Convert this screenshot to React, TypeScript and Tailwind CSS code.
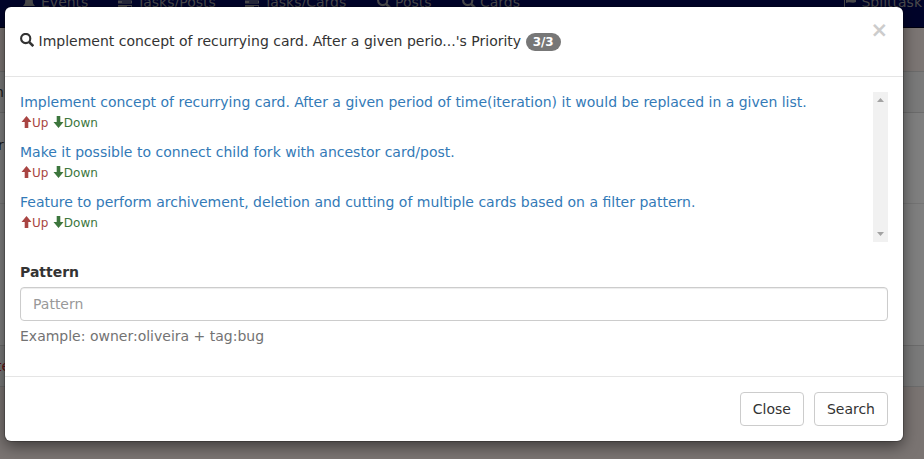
import React from "react";

const SearchIcon = ({ className = "" }: { className?: string }) => (
  <svg viewBox="0 0 14 14" className={`h-[14px] w-[14px] shrink-0 ${className}`} fill="none" stroke="currentColor">
    <circle cx="5.7" cy="5.5" r="4.6" strokeWidth="2.1" />
    <path d="M9 8.900l4.300 4.200" strokeWidth="2.700" />
  </svg>
);

const BellIcon = () => (
  <svg viewBox="0 0 14 14" className="h-[14px] w-[14px] shrink-0" fill="currentColor">
    <path d="M6 1h2v1c2 .5 2.8 2 2.8 4 0 2 .6 3.500 2.200 5H1c1.600-1.500 2.200-3 2.200-5C3.200 4 4 2.500 6 2zM5.500 12h3v1h-3z" />
  </svg>
);

const TasksIcon = () => (
  <svg viewBox="0 0 14 14" className="h-[14px] w-[14px] shrink-0" fill="currentColor">
    <path fillRule="evenodd" d="M0 1h14v3H0zM8 2h5v1H8zM0 5.500h14v3H0zM4 6.500h9v1H4zM0 10h14v3H0zM9 11h4v1H9z" />
  </svg>
);

const FlagIcon = () => (
  <svg viewBox="0 0 14 14" className="h-[14px] w-[14px] shrink-0" fill="currentColor">
    <path d="M1 0h1v14H1zM3 1c3-1 5 2 10 0v6c-4 2-6-1-10 1z" />
  </svg>
);

const Arrow = ({ down = false }: { down?: boolean }) => (
  <svg viewBox="0 0 12 12" className={`-mt-[2px] h-3 w-3 shrink-0 ${down ? "-scale-y-100" : ""}`} fill="currentColor">
    <path d="M6.500 0L11.500 6H8.300V12H4.700V6H1.500z" />
  </svg>
);

const cards = [
  "Implement concept of recurrying card. After a given period of time(iteration) it would be replaced in a given list.",
  "Make it possible to connect child fork with ancestor card/post.",
  "Feature to perform archivement, deletion and cutting of multiple cards based on a filter pattern.",
];

function Navbar() {
  return (
    <div className="flex h-7 items-start border-b border-[#00000f] bg-[#00042a] pl-[22px] text-[#4a4a4c]">
      <div className="-mt-2 flex w-full items-center leading-5 whitespace-nowrap">
        <span className="flex w-[96px] items-center gap-[5px]"><BellIcon />Events</span>
        <span className="flex w-[127px] items-center gap-[5px]"><TasksIcon />Tasks/Posts</span>
        <span className="flex w-[131.500px] items-center gap-[5px]"><TasksIcon />Tasks/Cards</span>
        <span className="flex w-[85px] items-center gap-[4.500px]"><SearchIcon />Posts</span>
        <span className="flex items-center gap-[4.500px]"><SearchIcon />Cards</span>
        <span className="ml-auto flex items-center gap-[4px] pr-[2px]"><FlagIcon />Splittask</span>
      </div>
    </div>
  );
}

function Backdrop() {
  return (
    <div className="flex h-full flex-col">
      <Navbar />
      <div className="h-[43px] bg-[#7c7674]" />
      <div className="h-[41px] border-t border-[#6c6c6c] bg-[#7a7a7a] pt-[10px] leading-5 text-[#1a1a1a]"><span className="-ml-[5px]">n</span></div>
      <div className="h-[91px] border-t border-[#6c6c6c] bg-[#7f7f7f] pt-[22px] leading-5 text-[#1a1a1a]"><span className="-ml-[2px]">r</span></div>
      <div className="h-[142px] border-t border-[#747474] bg-[#7f7f7f]" />
      <div className="h-[42px] border-y border-[#6c6c6c] bg-[#7a7a7a] pt-[10px] leading-5 text-[#631313]"><span className="-ml-[4px]">te</span></div>
      <div className="flex-1 bg-[#7a7472]" />
    </div>
  );
}

function CardList() {
  return (
    <div className="flex h-[150px]">
      <div className="flex flex-1 flex-col gap-2.5 overflow-hidden">
        {cards.map((card) => (
          <div key={card}>
            <div className="leading-5 whitespace-nowrap text-[#337ab7]">{card}</div>
            <div className="flex h-5 items-center gap-1 pt-0.5 text-xs">
              <span className="flex items-center text-[#a94442]"><Arrow />Up</span>
              <span className="flex items-center text-[#3c763d]"><Arrow down /><span className="-ml-[0.6px]">Down</span></span>
            </div>
          </div>
        ))}
      </div>
      <div className="flex w-[15px] flex-col items-center justify-between bg-[#f1f1f1] py-[6px] text-[#a3a3a3]">
        <svg viewBox="0 0 7 4" className="h-1 w-[7px]" fill="currentColor"><path d="M0 4L3.500 0L7 4z" /></svg>
        <svg viewBox="0 0 7 4" className="h-1 w-[7px]" fill="currentColor"><path d="M0 0L3.500 4L7 0z" /></svg>
      </div>
    </div>
  );
}

const buttonClass = "h-[34px] rounded-[4px] border border-[#ccc] bg-white px-3 leading-5 text-[#333]";

export default function App() {
  return (
    <div className="relative h-[459px] w-[924px] overflow-hidden font-['DejaVu_Sans',sans-serif] text-[14px] text-[#333]">
      <Backdrop />
      <div className="absolute top-[7px] left-[5px] flex h-[434px] w-[898px] flex-col rounded-[6px] bg-white shadow-[0_5px_15px_rgba(0,0,0,0.5),0_0_0_1px_rgba(0,0,0,0.2)]">
        <header className="flex h-[70px] items-start justify-between border-b border-[#e5e5e5] px-[15px]">
          <div className="mt-6 flex h-5 items-center leading-5">
            <SearchIcon className="mr-[4.500px] -mt-[2px]" />
            <span className="whitespace-nowrap">Implement concept of recurrying card. After a given perio...'s Priority</span>
            <span className="mt-[2px] ml-[4.500px] flex h-[18px] items-center rounded-[10px] bg-[#777] px-[7px] text-xs font-bold text-white">3/3</span>
          </div>
          <button aria-label="Close" className="mt-[13px] h-[21px] text-[21px] leading-[21px] font-bold text-[#ccc]">×</button>
        </header>
        <main className="h-[299px] p-[15px]">
          <CardList />
          <label htmlFor="pattern" className="mt-5 mb-[5px] block leading-5 font-bold">Pattern</label>
          <input id="pattern" placeholder="Pattern" className="block h-[34px] w-full rounded-[4px] border border-[#ccc] bg-white px-3 leading-5 shadow-[inset_0_1px_1px_rgba(0,0,0,0.075)] placeholder:text-[#999]" />
          <p className="mt-[5px] leading-5 text-[#737373]">Example: owner:oliveira + tag:bug</p>
        </main>
        <footer className="flex h-[65px] justify-end gap-2.5 border-t border-[#e5e5e5] p-[15px]">
          <button className={buttonClass}>Close</button>
          <button className={buttonClass}>Search</button>
        </footer>
      </div>
    </div>
  );
}
